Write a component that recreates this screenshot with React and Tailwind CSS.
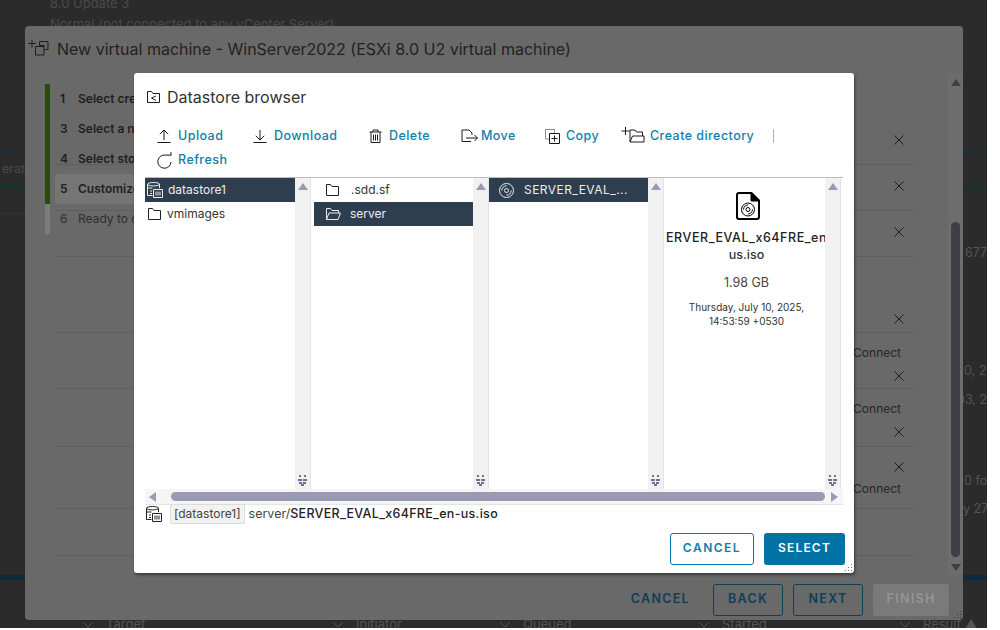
import React from 'react';

// small drawn icons, stroke follows the text colour
function Svg({ w, h, className = '', children }) {
  return (
    <svg width={w} height={h} viewBox={`0 0 ${w} ${h}`} fill="none" stroke="currentColor" strokeWidth="1" className={`shrink-0 ${className}`}>
      {children}
    </svg>
  );
}

const UploadIcon = () => (
  <Svg w={14} h={14}><path d="M0.5 13.5h13M7 11V1M2.8 5.2 7 1l4.2 4.2" /></Svg>
);
const DownloadIcon = () => (
  <Svg w={14} h={14}><path d="M0.5 13.5h13M7 1v10M2.8 6.8 7 11l4.2-4.2" /></Svg>
);
const TrashIcon = () => (
  <Svg w={13} h={14}><path d="M0.5 3h12M4 3V1h5v2M2 3v10.5h9V3M4.5 5.5v6M6.5 5.5v6M8.5 5.5v6" /></Svg>
);
const MoveIcon = () => (
  <Svg w={18} h={14}><path d="M1 1h7l3 3v2M1 1v11.5h9M5 9h11.5M13.5 6l3 3-3 3" /></Svg>
);
const CopyIcon = () => (
  <Svg w={15} h={15}><path d="M4 10H0.5V0.5h9V4" className="opacity-50" /><path d="M4.5 4.5h10v10h-10zM9.5 6.5v6M6.5 9.5h6" /></Svg>
);
const NewFolderIcon = () => (
  <Svg w={24} h={16}><path d="M0.5 4h8M4.5 0v8" /><path d="M9 15h14l0-6H11.5L9 15V3h5l1.5 2h6v4" /></Svg>
);
const RefreshIcon = () => (
  <Svg w={16} h={17}><path d="M14 10A6.6 6.6 0 1 1 8.5 3.1h5.5M14 0v3.5" /></Svg>
);
const FolderIcon = () => (
  <Svg w={13} h={12}><path d="M0.5 11.5v-11h4l1.5 2h6.5v9z" /></Svg>
);
const OpenFolderIcon = () => (
  <Svg w={15} h={12}><path d="M0.5 11.5v-11h4l1.5 2h6.5v2.5M0.5 11.5h11.5l2.5-6.5H3z" /></Svg>
);
const DatastoreIcon = () => (
  <Svg w={16} h={16}>
    <ellipse cx="6.5" cy="2.2" rx="6" ry="1.7" />
    <path d="M0.5 2.2v11.3h5M12.5 2.2v4M0.5 6h5M3 9h2M3 11.5h2" />
    <path d="M6.5 7.5h9v8h-9zM9 9.5v4M11 9.5v4M13 9.5v4" />
  </Svg>
);
const BrowserIcon = () => (
  <Svg w={13} h={12}><path d="M0.5 11.5v-11h4l1.5 2h6.5v9zM9 5 4.5 7 9 9.5" /></Svg>
);
const DiscIcon = () => (
  <Svg w={15} h={15}><circle cx="7.5" cy="7.5" r="7" /><circle cx="7.5" cy="7.5" r="2" /><path d="M2.8 7.5a4.7 4.7 0 0 1 4.7-4.7M12.2 7.5a4.7 4.7 0 0 1-4.7 4.7" /></Svg>
);
const DiscFileIcon = () => (
  <Svg w={24} h={28}>
    <path d="M1 3a2 2 0 0 1 2-2h12.5L23 8.5V25a2 2 0 0 1-2 2H3a2 2 0 0 1-2-2z" strokeWidth="2" />
    <path d="M15 1v8h8" fill="currentColor" strokeWidth="1" />
    <circle cx="12" cy="17.5" r="6.5" />
    <circle cx="12" cy="17.5" r="2" />
    <path d="M7.5 17.5a4.5 4.5 0 0 1 4.5-4.5M16.5 17.5a4.5 4.5 0 0 1-4.5 4.5" />
  </Svg>
);
const VmAddIcon = () => (
  <Svg w={21} h={17}><path d="M0 4.5h8M4 0.5v8" /><path d="M11.5 6.5V2.5h8.5v8h-4" /><path d="M7.5 7.5h8.5v8.5H7.5zM11.5 6.5h4.5v1" /></Svg>
);
const CloseIcon = () => (
  <Svg w={10} h={10}><path d="M0.5 0.5l9 9M9.5 0.5l-9 9" /></Svg>
);
const Chevron = () => (
  <Svg w={10} h={6}><path d="M0.5 0.5 5 5l4.5-4.5" /></Svg>
);

const ArrowUp = ({ className = 'text-[#9a9ab4]' }) => (
  <svg width="10" height="7" viewBox="0 0 10 7" className={className}><path d="M5 0l5 7H0z" fill="currentColor" /></svg>
);
const ArrowDown = ({ className = 'text-[#9a9ab4]' }) => (
  <svg width="10" height="7" viewBox="0 0 10 7" className={className}><path d="M5 7l5-7H0z" fill="currentColor" /></svg>
);
const ArrowSide = ({ flip }) => (
  <svg width="7" height="10" viewBox="0 0 7 10" className={`text-[#9a9ab4] ${flip ? 'rotate-180' : ''}`}><path d="M0 5l7-5v10z" fill="currentColor" /></svg>
);
const Grip = () => (
  <svg width="9" height="12" viewBox="0 0 9 12" className="text-[#6f6f94]">
    <path d="M1 0h2v2H1zM6 0h2v2H6zM0 4h4v2H0zM5 4h4v2H5zM1 7h3v2H1zM5 7h3v2H5zM3 9h3v2H3z" fill="currentColor" />
  </svg>
);
const ResizeDots = ({ className }) => (
  <svg width="8" height="8" viewBox="0 0 8 8" className={className}>
    <path d="M6 0h1v1H6zM3 3h1v1H3zM6 3h1v1H6zM0 6h1v1H0zM3 6h1v1H3zM6 6h1v1H6z" fill="currentColor" />
  </svg>
);

const TOOLBAR = [
  { label: 'Upload', icon: <UploadIcon />, cls: 'w-[96px]', slot: 'w-[21px]' },
  { label: 'Download', icon: <DownloadIcon />, cls: 'w-[116px]', slot: 'w-[21px]' },
  { label: 'Delete', icon: <TrashIcon />, cls: 'w-[92px]', slot: 'w-[20px]' },
  { label: 'Move', icon: <MoveIcon />, cls: 'w-[84px]', slot: 'w-[20px]' },
  { label: 'Copy', icon: <CopyIcon />, cls: 'w-[76px]', slot: 'w-[21px]' },
  { label: 'Create directory', icon: <NewFolderIcon />, cls: 'w-[152px]', slot: 'w-[29px] -mt-[2px]' },
  { label: 'Refresh', icon: <RefreshIcon />, cls: 'w-[96px]', slot: 'w-[21px]' },
];

function ToolButton({ item }) {
  return (
    <div className={`flex h-[24px] items-center text-[#1a1a1a] ${item.cls}`}>
      <span className={`flex items-center ${item.slot}`}>{item.icon}</span>
      <span className="text-[12.5px] font-medium tracking-[0.45px] text-[#0f7fa8]">{item.label}</span>
    </div>
  );
}

function ScrollBar() {
  return (
    <div className="flex h-full w-[16px] shrink-0 flex-col items-center justify-between border-r border-[#e4e4e4] bg-[#f1f1f1] pt-[5px] pb-[2px]">
      <ArrowUp />
      <Grip />
    </div>
  );
}

function Row({ icon, label, selected, className = '' }) {
  return (
    <div className={`flex h-[24px] items-center whitespace-nowrap text-[12px] ${selected ? 'bg-[#2f3e4e] text-[#e9edf0]' : 'text-[#333]'} ${className}`}>
      {icon}
      <span>{label}</span>
    </div>
  );
}

function DatastoreBrowser() {
  return (
    <div className="absolute left-[109px] top-[47px] flex h-[500px] w-[720px] flex-col rounded-[3px] bg-white shadow-[1px_2px_3px_rgba(0,0,0,0.45)]">
      <div className="flex h-[48px] items-center pb-[1px] pl-[13px] text-[#1c1c1c]">
        <BrowserIcon />
        <span className="ml-[7px] text-[16px] text-[#333]">Datastore browser</span>
      </div>

      <div className="relative ml-[23px] mt-[3px] flex h-[48px] w-[640px] flex-wrap content-start">
        {TOOLBAR.map((item) => (
          <ToolButton key={item.label} item={item} />
        ))}
        <div className="absolute left-[616px] top-[5px] h-[14px] w-px bg-[#b5b5b5]" />
      </div>

      <div className="mx-[11px] mt-[5px] flex h-[312px] border-t border-[#bcbcbc]">
        <div className="flex w-[150px] shrink-0 flex-col">
          <Row selected icon={<span className="ml-[2px] mr-[5px] flex"><DatastoreIcon /></span>} label="datastore1" />
          <Row icon={<span className="ml-[3px] mr-[6px] flex text-[#222]"><FolderIcon /></span>} label="vmimages" />
        </div>
        <ScrollBar />
        <div className="flex w-[162px] shrink-0 flex-col pl-[3px]">
          <Row icon={<span className="ml-[12px] mr-[12px] flex text-[#222]"><FolderIcon /></span>} label=".sdd.sf" />
          <Row selected icon={<span className="ml-[12px] mr-[9px] flex"><OpenFolderIcon /></span>} label="server" />
        </div>
        <ScrollBar />
        <div className="flex w-[159px] shrink-0 flex-col">
          <Row selected icon={<span className="ml-[10px] mr-[10px] flex"><DiscIcon /></span>} label="SERVER_EVAL_..." className="tracking-[0.45px]" />
        </div>
        <ScrollBar />
        <div className="flex w-[161px] shrink-0 flex-col items-center overflow-hidden pl-[4px] pt-[14px] text-center">
          <span className="ml-[3px] text-black"><DiscFileIcon /></span>
          <div className="-ml-[4px] mt-[9px] w-[161px] self-start overflow-hidden whitespace-nowrap pl-[2px] text-left text-[12.5px] font-medium leading-[17px] tracking-[0.55px] text-[#222]">ERVER_EVAL_x64FRE_en-</div>
          <div className="text-[12.5px] font-medium leading-[17px] text-[#333]">us.iso</div>
          <div className="mt-[11px] text-[12.5px] leading-[17px] text-[#444]">1.98 GB</div>
          <div className="mt-[9px] text-[10px] leading-[14px] text-[#333]">
            Thursday, July 10, 2025,
            <br />
            14:53:59 +0530
          </div>
        </div>
        <ScrollBar />
      </div>

      <div className="mx-[11px] flex h-[16px] items-center border-b border-[#e4e4e4] bg-[#f5f5f5] pl-[4px] pr-[5px]">
        <ArrowSide />
        <div className="ml-[15px] mr-[6px] h-[9px] flex-1 rounded-full bg-[#9a9ab4]" />
        <ArrowSide flip />
      </div>

      <div className="-mt-[1px] ml-[12px] flex h-[20px] items-center text-[#222]">
        <DatastoreIcon />
        <span className="ml-[8px] flex h-[20px] items-center rounded-[2px] border border-[#dcdcdc] bg-[#f2f2f2] px-[3px] pb-[1px] text-[12px] text-[#444]">[datastore1]</span>
        <span className="ml-[4px] text-[12.5px] text-[#444]">server/</span>
        <span className="text-[12.5px] font-medium tracking-[0.3px] text-[#222]">SERVER_EVAL_x64FRE_en-us.iso</span>
      </div>

      <div className="mr-[9px] mt-[9px] flex justify-end gap-[10px]">
        <button className="h-[32px] w-[84px] rounded-[3px] border border-[#0079ad] bg-white pb-[2px] text-[12px] font-semibold tracking-[1.5px] text-[#0f7fa8]">CANCEL</button>
        <button className="h-[32px] w-[81px] rounded-[3px] bg-[#0072a3] pb-[2px] text-[12px] font-semibold tracking-[1.2px] text-white">SELECT</button>
      </div>
      <ResizeDots className="absolute bottom-[1px] right-[1px] text-[#777]" />
    </div>
  );
}

function Step({ n, label, bold, active }) {
  return (
    <div className={`flex h-[30px] w-[300px] items-center pl-[5px] text-[12px] ${bold ? 'font-semibold text-[#1f1f1f]' : 'text-[#2e2e2e]'} ${active ? 'rounded-l-[3px] bg-[#757575]' : ''}`}>
      <span className="w-[18px]">{n}</span>
      <span>{label}</span>
    </div>
  );
}

// right hand rows that stick out beside the datastore browser
const SETTINGS_ROWS = [
  { h: 'h-[46px]', items: 'justify-center pb-[4px]' },
  { h: 'h-[46px]', items: 'justify-center pb-[4px]' },
  { h: 'h-[46px]', items: 'justify-center pb-[4px]' },
  { h: 'h-[76px]', items: 'justify-end pb-[8px]' },
  { h: 'h-[56px]', items: 'justify-start pt-[12px]', connect: 'first' },
  { h: 'h-[58px]', items: 'justify-start pt-[12px]', connect: 'first' },
  { h: 'h-[62px]', items: 'justify-start pt-[15px]', connect: 'last' },
  { h: 'h-[47px]', items: 'justify-center', empty: true },
];

function SettingsRow({ row }) {
  const connect = <div className="mr-[14px] text-[12px] leading-[16px] text-[#262626]">Connect</div>;
  return (
    <div className={`flex w-full flex-col items-end border-b border-[#5f5f5f] ${row.h} ${row.items}`}>
      {row.connect === 'first' && connect}
      {!row.empty && (
        <span className={`mr-[11px] text-[#1c1c1c] ${row.connect === 'first' ? 'mt-[10px]' : ''} ${row.connect === 'last' ? 'mb-[9px]' : ''}`}>
          <CloseIcon />
        </span>
      )}
      {row.connect === 'last' && connect}
    </div>
  );
}

function Wizard() {
  return (
    <div className="absolute left-[25px] top-[26px] flex h-[594px] w-[938px] flex-col rounded-[4px] bg-[#696969] font-['Inter','Liberation_Sans',sans-serif]">
      <div className="flex h-[48px] items-center pb-[3px] pl-[3px] text-[#1c1c1c]">
        <span className="-mt-[2px] flex"><VmAddIcon /></span>
        <span className="ml-[8px] text-[16px] text-[#222]">New virtual machine - WinServer2022 (ESXi 8.0 U2 virtual machine)</span>
      </div>

      <div className="flex h-[501px]">
        <div className="ml-[20px] flex h-[150px] w-[5px] shrink-0 flex-col pt-[10px]">
          <div className="h-[120px] shrink-0 bg-[#2b4a0e]" />
          <div className="h-[30px] shrink-0 bg-[#7c7c7c]" />
        </div>
        <div className="ml-[5px] flex w-[860px] shrink-0 flex-col pt-[10px]">
          <div className="absolute flex flex-col">
            <Step n="1" label="Select creation type" bold />
            <Step n="3" label="Select a name and folder" bold />
            <Step n="4" label="Select storage" bold />
            <Step n="5" label="Customize settings" bold active />
            <Step n="6" label="Ready to complete" />
          </div>
          <div className="mt-[35px] flex flex-col">
            {SETTINGS_ROWS.map((row, i) => (
              <SettingsRow key={i} row={row} />
            ))}
          </div>
        </div>
        <div className="ml-[33px] flex h-[501px] w-[15px] shrink-0 flex-col items-center bg-[#6d6d6d] pt-[5px] pb-[4px]">
          <ArrowUp className="text-[#3f3f4a]" />
          <div className="mt-[136px] h-[335px] w-[9px] rounded-full bg-[#3f3f47]" />
          <div className="mt-auto"><ArrowDown className="text-[#3f3f4a]" /></div>
        </div>
      </div>

      <div className="mt-[9px] flex items-center justify-end gap-[10px] pr-[14px] text-[12.5px] font-semibold tracking-[1.3px]">
        <button className="mr-[13px] pb-[2px] pl-[1px] text-[#0d3f57]">CANCEL</button>
        <button className="h-[32px] w-[70px] rounded-[3px] border border-[#0d3f57] pb-[2px] text-[#0d3f57]">BACK</button>
        <button className="h-[32px] w-[70px] rounded-[3px] border border-[#0d3f57] pb-[2px] text-[#0d3f57]">NEXT</button>
        <button className="h-[32px] w-[76px] rounded-[3px] bg-[#7a7a7a] pb-[2px] text-[#959595]">FINISH</button>
      </div>
      <ResizeDots className="absolute bottom-[1px] right-[1px] text-[#333]" />
      <DatastoreBrowser />
    </div>
  );
}

function BackPage() {
  const tab = 'mt-[152px] h-[35px] border-y border-[#12303e]';
  return (
    <div className="flex h-full flex-col text-[13px] text-[#4a4a4a]">
      <div className="flex h-[575px]">
        <div className="w-[25px] shrink-0 overflow-hidden">
          <div className={`${tab} flex items-center justify-end whitespace-nowrap text-[12.5px]`}>erat</div>
          <div className="mt-[26px] h-px bg-[#333]" />
        </div>
        <div className="flex-1 pl-[25px] leading-[21px]">
          <div className="-mt-[7px]">8.0 Update 3</div>
          <div>Normal (not connected to any vCenter Server)</div>
        </div>
        <div className="w-[24px] shrink-0 overflow-hidden whitespace-nowrap text-[12.5px] text-[#555]">
          <div className={tab} />
          <div className="ml-[2px] mt-[57px]">6778</div>
          <div className="ml-[1px] mt-[99px]">0, 20</div>
          <div className="-ml-[6px] mt-[10px]">03, 2</div>
          <div className="ml-[1px] mt-[63px]">0 for</div>
          <div className="mt-[9px]">y 27</div>
        </div>
      </div>
      <div className="h-[5px] bg-[#0f2a3c]" />
      <div className="-mb-[3px] mt-auto flex h-[13px] items-center overflow-hidden text-[13px] leading-none text-[#555]">
        <span className="ml-[83px]"><Chevron /></span>
        <span className="ml-[13px] w-[227px]">Target</span>
        <Chevron />
        <span className="ml-[13px] w-[144px]">Initiator</span>
        <Chevron />
        <span className="ml-[13px] w-[176px]">Queued</span>
        <Chevron />
        <span className="ml-[13px] w-[178px]">Started</span>
        <Chevron />
        <span className="ml-[13px]">Result ▲</span>
      </div>
    </div>
  );
}

export default function App() {
  return (
    <div className="h-[630px] w-[1000px] overflow-hidden bg-white font-['Inter','Liberation_Sans',sans-serif]">
      <div className="relative h-[628px] w-[987px] overflow-hidden bg-[#2b2b2b]">
        <BackPage />
        <Wizard />
      </div>
    </div>
  );
}
